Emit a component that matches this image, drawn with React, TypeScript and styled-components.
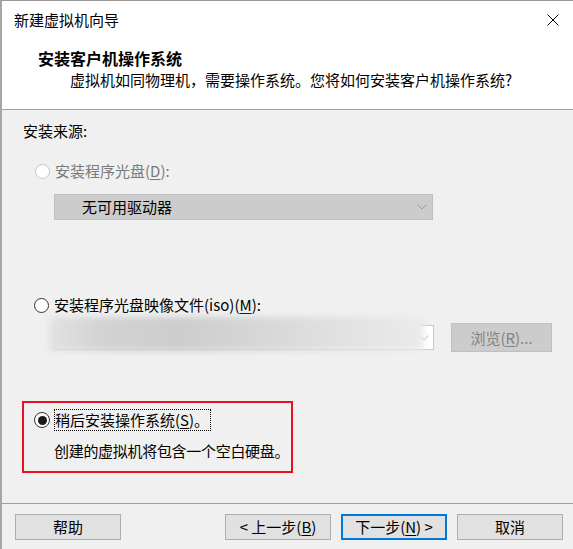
import React from 'react';
import styled, { createGlobalStyle, css } from 'styled-components';

const GlobalStyle = createGlobalStyle`
  html, body {
    margin: 0;
    padding: 0;
    background: #f0f0f0;
  }
  body {
    font-family: "Noto Sans CJK SC", "Noto Sans", sans-serif;
    font-size: 15px;
    color: #000;
  }
`;

const Window = styled.div`
  box-sizing: border-box;
  height: 549px;
  border-top: 1px solid #9a9a9a;
  border-left: 2px solid #a6a6a6;
  display: flex;
  flex-direction: column;
  background: #f0f0f0;
  overflow: hidden;
  white-space: nowrap;
`;

const TitleBar = styled.div`
  height: 38px;
  flex: none;
  background: #fff;
  display: flex;
  align-items: center;
  justify-content: space-between;
  padding: 0 14px 0 12px;
  line-height: 20px;
`;

const Header = styled.div`
  height: 71px;
  flex: none;
  box-sizing: border-box;
  background: #fff;
  border-bottom: 1px solid #a0a0a0;
  padding: 9px 0 0 36px;
`;

const HeaderTitle = styled.div`
  font-weight: bold;
  font-size: 16px;
  line-height: 20px;
`;

const HeaderSub = styled.div`
  line-height: 20px;
  margin-top: 2px;
  padding-left: 32px;
`;

const Body = styled.div`
  flex: 1;
  display: flex;
  flex-direction: column;
  align-items: flex-start;
`;

const SourceLabel = styled.div`
  line-height: 20px;
  margin: 11px 0 0 21px;
`;

const OptionRow = styled.div<{ $top: number; $left: number; $disabled?: boolean }>`
  display: flex;
  align-items: center;
  gap: 4px;
  line-height: 20px;
  margin-top: ${(p) => p.$top}px;
  margin-left: ${(p) => p.$left}px;
  color: ${(p) => (p.$disabled ? '#7a7a7a' : '#000')};
`;

const Radio = styled.span<{ $checked?: boolean; $disabled?: boolean }>`
  box-sizing: border-box;
  width: 15px;
  height: 15px;
  border-radius: 50%;
  border: 1px solid ${(p) => (p.$disabled ? '#c4c4c4' : '#333')};
  background: #fff;
  display: flex;
  align-items: center;
  justify-content: center;
  flex: none;
  ${(p) =>
    p.$checked &&
    css`
      width: 16px;
      height: 16px;
      border-width: 1.5px;
      &::after {
        content: '';
        width: 9px;
        height: 9px;
        border-radius: 50%;
        background: #1a1a1a;
      }
    `}
`;

const Label = styled.span<{ $focused?: boolean }>`
  border: 1px dotted ${(p) => (p.$focused ? '#000' : 'transparent')};
  padding: 0 1px 0 0;
`;

const U = styled.span`
  text-decoration: underline;
  text-underline-offset: 2px;
`;

const Select = styled.div`
  box-sizing: border-box;
  margin: 12px 0 0 52px;
  width: 379px;
  height: 26px;
  background: #cccccc;
  border: 1px solid #bfbfbf;
  display: flex;
  align-items: center;
  justify-content: space-between;
  padding: 0 5px 0 27px;
  line-height: 20px;
`;

const ComboRow = styled.div`
  display: flex;
  align-items: flex-start;
  margin-left: 47px;
  height: 36px;
`;

const Combo = styled.div`
  position: relative;
  width: 385px;
  height: 36px;
`;

const ComboBox = styled.div`
  box-sizing: border-box;
  margin: 9px 0 0 5px;
  width: 380px;
  height: 25px;
  background: #fff;
  border: 1px solid #c8c8c8;
  display: flex;
  align-items: center;
  justify-content: flex-end;
  padding-right: 4px;
`;

const BlurMask = styled.div`
  position: absolute;
  left: 0;
  top: 1px;
  width: 375px;
  height: 34px;
  background: linear-gradient(
    to right,
    #e2e2e2 0%,
    #d2d2d2 15%,
    #cdcdcd 35%,
    #d6d6d6 55%,
    #e0e0e0 75%,
    #ebebeb 100%
  );
  filter: blur(3px);
`;

const DisabledButton = styled.div`
  box-sizing: border-box;
  margin: 7px 0 0 17px;
  width: 101px;
  height: 29px;
  background: #cccccc;
  border: 1px solid #bfbfbf;
  color: #838383;
  display: flex;
  align-items: center;
  justify-content: center;
  line-height: 20px;
`;

const RedBox = styled.div`
  box-sizing: border-box;
  margin: 49px 0 0 20px;
  width: 271px;
  height: 72px;
  border: 2px solid #e81123;
  padding-top: 6px;
`;

const Desc = styled.div`
  line-height: 20px;
  margin-top: 10px;
  padding-left: 30px;
  letter-spacing: -0.3px;
`;

const Footer = styled.div`
  height: 46px;
  flex: none;
  box-sizing: border-box;
  border-top: 1px solid #a0a0a0;
  display: flex;
  align-items: center;
  padding: 0 10px 0 13px;
  gap: 10px;
`;

const Spacer = styled.div`
  flex: 1;
`;

const Button = styled.div<{ $primary?: boolean }>`
  box-sizing: border-box;
  width: 106px;
  height: 26px;
  background: #e1e1e1;
  border: ${(p) => (p.$primary ? '2px solid #0078d7' : '1px solid #adadad')};
  display: flex;
  align-items: center;
  justify-content: center;
  line-height: 20px;
  white-space: pre;
`;

const Chevron = ({ color }: { color: string }) => (
  <svg width="10" height="6" viewBox="0 0 10 6">
    <path d="M0.5 0.5 L5 5 L9.5 0.5" fill="none" stroke={color} strokeWidth="1" />
  </svg>
);

const CloseIcon = () => (
  <svg width="12" height="12" viewBox="0 0 12 12">
    <path d="M0.5 0.5 L11.5 11.5 M11.5 0.5 L0.5 11.5" stroke="#000" strokeWidth="1" />
  </svg>
);

const App: React.FC = () => {
  return (
    <>
      <GlobalStyle />
      <Window>
        <TitleBar>
          <span>新建虚拟机向导</span>
          <CloseIcon />
        </TitleBar>
        <Header>
          <HeaderTitle>安装客户机操作系统</HeaderTitle>
          <HeaderSub>虚拟机如同物理机，需要操作系统。您将如何安装客户机操作系统?</HeaderSub>
        </Header>
        <Body>
          <SourceLabel>安装来源:</SourceLabel>
          <OptionRow $top={19} $left={33} $disabled>
            <Radio $disabled />
            <Label>
              安装程序光盘(<U>D</U>):
            </Label>
          </OptionRow>
          <Select>
            <span>无可用驱动器</span>
            <Chevron color="#9a9a9a" />
          </Select>
          <OptionRow $top={74} $left={32}>
            <Radio />
            <Label>
              安装程序光盘映像文件(iso)(<U>M</U>):
            </Label>
          </OptionRow>
          <ComboRow>
            <Combo>
              <ComboBox>
                <Chevron color="#b0b0b0" />
              </ComboBox>
              <BlurMask />
            </Combo>
            <DisabledButton>
              浏览(<U>R</U>)...
            </DisabledButton>
          </ComboRow>
          <RedBox>
            <OptionRow $top={0} $left={10}>
              <Radio $checked />
              <Label $focused>
                稍后安装操作系统(<U>S</U>)。
              </Label>
            </OptionRow>
            <Desc>创建的虚拟机将包含一个空白硬盘。</Desc>
          </RedBox>
        </Body>
        <Footer>
          <Button>帮助</Button>
          <Spacer />
          <Button>
            {'< 上一步('}
            <U>B</U>
            {')'}
          </Button>
          <Button $primary>
            {'下一步('}
            <U>N</U>
            {') >'}
          </Button>
          <Button>取消</Button>
        </Footer>
      </Window>
    </>
  );
};

export default App;
